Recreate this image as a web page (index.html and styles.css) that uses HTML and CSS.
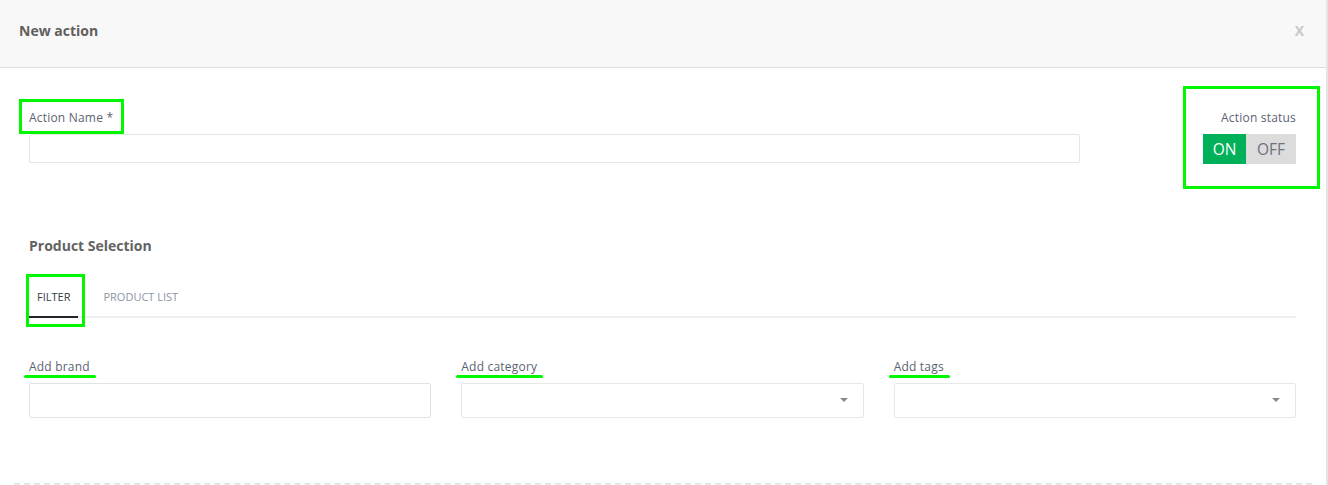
FILE: index.html
```html
<!DOCTYPE html>
<html>
<head>
  <link rel="stylesheet" href="styles.css">
</head>
<body>
  <div class="modal">
    <div class="modal-header">
      <h2 class="modal-title">New action</h2>
      <span class="close">X</span>
    </div>
    <div class="modal-body">
      <div class="top-row">
        <div class="field name-field">
          <label class="field-label">Action Name *</label>
          <input type="text" class="text-input">
          <span class="mark mark-name"></span>
        </div>
        <div class="status">
          <label class="field-label">Action status</label>
          <div class="toggle">
            <span class="toggle-on">ON</span>
            <span class="toggle-off">OFF</span>
          </div>
          <span class="mark mark-status"></span>
        </div>
      </div>

      <h3 class="section-title">Product Selection</h3>
      <div class="tabs">
        <div class="tab active">FILTER<span class="mark mark-tab"></span></div>
        <div class="tab">PRODUCT LIST</div>
      </div>

      <div class="filters">
        <div class="field">
          <label class="field-label underlined">Add brand</label>
          <input type="text" class="box-input">
        </div>
        <div class="field">
          <label class="field-label underlined">Add category</label>
          <div class="select-box"><span class="caret"></span></div>
        </div>
        <div class="field">
          <label class="field-label underlined">Add tags</label>
          <div class="select-box"><span class="caret"></span></div>
        </div>
      </div>
      <div class="divider"></div>
    </div>
  </div>
</body>
</html>
```
FILE: styles.css
```css
body {
  margin: 0;
  font-family: "Open Sans", Lato, sans-serif;
  background: #fff;
}
.modal {
  width: 1326px;
  height: 485px;
  border-right: 2px solid #e4e4e4;
  overflow: hidden;
}
.modal-header {
  height: 68px;
  background: #f8f8f8;
  border-bottom: 1px solid #dedede;
  display: flex;
  align-items: center;
  justify-content: space-between;
  padding: 0 22px 6px 19px;
  box-sizing: border-box;
}
.modal-title {
  margin: 0;
  font-size: 14px;
  font-weight: bold;
  color: #5f5f5f;
  line-height: 18px;
}
.close {
  font-size: 14px;
  font-weight: bold;
  color: #c8c8c8;
  line-height: 18px;
}
.modal-body {
  padding: 0 30px 0 29px;
}
.top-row {
  display: flex;
  justify-content: space-between;
  padding-top: 42px;
}
.field {
  position: relative;
  display: flex;
  flex-direction: column;
}
.name-field {
  width: 1051px;
}
.field-label {
  font-size: 12px;
  letter-spacing: 0.2px;
  color: #5b6372;
  line-height: 16px;
  margin-bottom: 8px;
  position: relative;
}
.text-input {
  height: 29px;
  border: 1px solid #e3e7e9;
  border-radius: 2px;
  box-sizing: border-box;
  margin: 0;
}
.status {
  position: relative;
  display: flex;
  flex-direction: column;
  align-items: flex-end;
}
.toggle {
  display: flex;
  height: 30px;
  font-size: 15.5px;
  line-height: 30px;
}
.toggle-on {
  width: 43px;
  text-align: center;
  background: #00b159;
  color: #fff;
}
.toggle-off {
  width: 50px;
  text-align: center;
  background: #dcdcdc;
  color: #6b7280;
}
.section-title {
  margin: 73px 0 0 0;
  font-size: 14px;
  font-weight: bold;
  color: #636363;
  line-height: 18px;
}
.tabs {
  display: flex;
  gap: 25px;
  margin-top: 26px;
  height: 37px;
  box-shadow: inset 0 -2px 0 #eeeeee;
}
.tab {
  position: relative;
  font-size: 11px;
  line-height: 16px;
  color: #8c95a6;
  padding-top: 8px;
  box-sizing: border-box;
  height: 37px;
}
.tab.active {
  color: #333a44;
  padding: 8px 8px 0 8px;
  border-bottom: 2px solid #22252b;
}
.filters {
  display: grid;
  grid-template-columns: repeat(3, 1fr);
  gap: 30px;
  margin-top: 41px;
}
.filters .field-label {
  align-self: flex-start;
}
.box-input,
.select-box {
  height: 35px;
  border: 1px solid #dfe3e6;
  border-radius: 2px;
  box-sizing: border-box;
  margin: 0;
  position: relative;
}
.select-box {
  border-color: #e6e8ea;
}
.caret {
  position: absolute;
  right: 15px;
  top: 14px;
  border-left: 4px solid transparent;
  border-right: 4px solid transparent;
  border-top: 4px solid #8a8a8a;
}
.divider {
  margin: 65px -16px 0 -15px;
  border-top: 2px dashed #e6e6e6;
}

/* green review markings */
.mark {
  position: absolute;
  border: 3px solid #00f700;
  pointer-events: none;
}
.mark-name {
  left: -10px;
  top: -11px;
  width: 99px;
  height: 29px;
}
.mark-status {
  right: -24px;
  top: -24px;
  width: 131px;
  height: 97px;
}
.mark-tab {
  left: -3px;
  top: -7px;
  width: 53px;
  height: 47px;
}
.underlined::after {
  content: "";
  position: absolute;
  left: -5px;
  right: -6px;
  bottom: -3px;
  height: 3px;
  border-radius: 2px;
  background: #00f700;
}
```
